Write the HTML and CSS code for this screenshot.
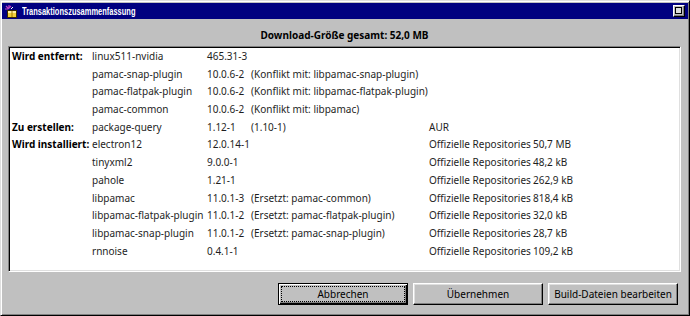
FILE: index.html
```html
<!DOCTYPE html>
<html lang="de">
<head>
    <meta charset="UTF-8">
    <title>Transaktionszusammenfassung</title>
    <link rel="stylesheet" href="styles.css">
</head>
<body>
    <div class="window">
        <div class="titlebar">
            <svg class="app-icon" width="13" height="13" viewBox="0 0 13 13">
                <rect x="2.5" y="5.5" width="9" height="7" fill="#f2cf3a" stroke="#3a2a00"/>
                <rect x="3" y="6" width="8" height="2" fill="#fff0a0"/>
                <line x1="7" y1="6" x2="7" y2="12" stroke="#a07800"/>
                <path d="M1 1 L4 4 M4 0 L4 3 M0 4 L3 4 M6 1 L4 3" stroke="#c040c0" stroke-width="1.2"/>
                <path d="M8 2 L6 4" stroke="#ffffff" stroke-width="1"/>
            </svg>
            <span class="title">Transaktionszusammenfassung</span>
            <span class="title-button"><span class="max-box"></span></span>
        </div>

        <div class="content">
            <h1 class="summary">Download-Größe gesamt: 52,0 MB</h1>

            <div class="panel">
                <div class="row">
                    <span class="label">Wird entfernt:</span>
                    <span>linux511-nvidia</span>
                    <span>465.31-3</span>
                    <span></span>
                    <span></span>
                    <span></span>
                </div>
                <div class="row">
                    <span class="label"></span>
                    <span>pamac-snap-plugin</span>
                    <span>10.0.6-2</span>
                    <span>(Konflikt mit: libpamac-snap-plugin)</span>
                    <span></span>
                    <span></span>
                </div>
                <div class="row">
                    <span class="label"></span>
                    <span>pamac-flatpak-plugin</span>
                    <span>10.0.6-2</span>
                    <span>(Konflikt mit: libpamac-flatpak-plugin)</span>
                    <span></span>
                    <span></span>
                </div>
                <div class="row">
                    <span class="label"></span>
                    <span>pamac-common</span>
                    <span>10.0.6-2</span>
                    <span>(Konflikt mit: libpamac)</span>
                    <span></span>
                    <span></span>
                </div>
                <div class="row">
                    <span class="label">Zu erstellen:</span>
                    <span>package-query</span>
                    <span>1.12-1</span>
                    <span>(1.10-1)</span>
                    <span>AUR</span>
                    <span></span>
                </div>
                <div class="row">
                    <span class="label">Wird installiert:</span>
                    <span>electron12</span>
                    <span>12.0.14-1</span>
                    <span></span>
                    <span>Offizielle Repositories</span>
                    <span>50,7 MB</span>
                </div>
                <div class="row">
                    <span class="label"></span>
                    <span>tinyxml2</span>
                    <span>9.0.0-1</span>
                    <span></span>
                    <span>Offizielle Repositories</span>
                    <span>48,2 kB</span>
                </div>
                <div class="row">
                    <span class="label"></span>
                    <span>pahole</span>
                    <span>1.21-1</span>
                    <span></span>
                    <span>Offizielle Repositories</span>
                    <span>262,9 kB</span>
                </div>
                <div class="row">
                    <span class="label"></span>
                    <span>libpamac</span>
                    <span>11.0.1-3</span>
                    <span>(Ersetzt: pamac-common)</span>
                    <span>Offizielle Repositories</span>
                    <span>818,4 kB</span>
                </div>
                <div class="row">
                    <span class="label"></span>
                    <span>libpamac-flatpak-plugin</span>
                    <span>11.0.1-2</span>
                    <span>(Ersetzt: pamac-flatpak-plugin)</span>
                    <span>Offizielle Repositories</span>
                    <span>32,0 kB</span>
                </div>
                <div class="row">
                    <span class="label"></span>
                    <span>libpamac-snap-plugin</span>
                    <span>11.0.1-2</span>
                    <span>(Ersetzt: pamac-snap-plugin)</span>
                    <span>Offizielle Repositories</span>
                    <span>28,7 kB</span>
                </div>
                <div class="row">
                    <span class="label"></span>
                    <span>rnnoise</span>
                    <span>0.4.1-1</span>
                    <span></span>
                    <span>Offizielle Repositories</span>
                    <span>109,2 kB</span>
                </div>
            </div>

            <div class="actions">
                <button class="btn btn-default">Abbrechen</button>
                <button class="btn">Übernehmen</button>
                <button class="btn">Build-Dateien bearbeiten</button>
            </div>
        </div>
    </div>
</body>
</html>
```

FILE: styles.css
```css
* {
    margin: 0;
    padding: 0;
    box-sizing: border-box;
}

body {
    font-family: "Noto Sans", "Open Sans", sans-serif;
    font-size: 10px;
    color: #1e1e1e;
    background: #c0c0c0;
}

.window {
    width: 690px;
    height: 316px;
    padding: 1px;
    background: #c0c0c0;
    border: 1px solid;
    border-color: #dfdfdf #000 #000 #dfdfdf;
    box-shadow: inset 1px 1px #fff, inset -1px -1px #808080;
    display: flex;
    flex-direction: column;
}

/* title bar */
.titlebar {
    height: 16px;
    margin-top: 1px;
    background: #000080;
    display: flex;
    align-items: center;
    padding-left: 3px;
}

.app-icon {
    flex: none;
    margin-right: 4px;
}

.title {
    flex: 1;
    font-family: "Liberation Sans", Arial, sans-serif;
    font-size: 11px;
    font-weight: bold;
    color: #fff;
    white-space: nowrap;
    transform: scaleX(0.68);
    transform-origin: left center;
}

.title-button {
    width: 12px;
    height: 12px;
    margin-right: 3px;
    background: #c0c0c0;
    border: 1px solid;
    border-color: #fff #000 #000 #fff;
    box-shadow: inset -1px -1px #808080;
    display: flex;
    align-items: center;
    justify-content: center;
}

.max-box {
    width: 7px;
    height: 7px;
    border: 1px solid #000;
    background: #dcdcdc;
    margin: 0 1px 1px 0;
}

/* content */
.content {
    flex: 1;
    padding: 0 7px 0 6px;
    display: flex;
    flex-direction: column;
}

.summary {
    margin-top: 7px;
    font-size: 10px;
    font-weight: bold;
    line-height: 18px;
    text-align: center;
    color: #000;
}

.panel {
    margin-top: 2px;
    height: 226px;
    background: #fff;
    border: 1px solid;
    border-color: #808080 #fff #fff #808080;
    box-shadow: inset 1px 1px #000, inset -1px -1px #dfdfdf;
    padding: 1px 0 0 3px;
}

.row {
    display: grid;
    grid-template-columns: 80px 115px 44px 178px 104px auto;
    height: 17.7px;
    line-height: 17.7px;
    white-space: nowrap;
}

.label {
    font-weight: bold;
    color: #000;
}

/* buttons */
.actions {
    margin-top: 11px;
    padding-right: 3px;
    display: flex;
    justify-content: flex-end;
    gap: 5px;
}

.btn {
    width: 130px;
    height: 22px;
    font-family: "Noto Sans", "Open Sans", sans-serif;
    font-size: 10px;
    color: #000;
    background: #c0c0c0;
    border: 1px solid;
    border-color: #fff #000 #000 #fff;
    box-shadow: inset -1px -1px #808080, inset 1px 1px #dfdfdf;
}

.btn-default {
    border-color: #000;
    box-shadow: inset 1px 1px #fff, inset -1px -1px #000, inset -2px -2px #808080;
    outline: 1px dotted #000;
    outline-offset: -4px;
}
```
